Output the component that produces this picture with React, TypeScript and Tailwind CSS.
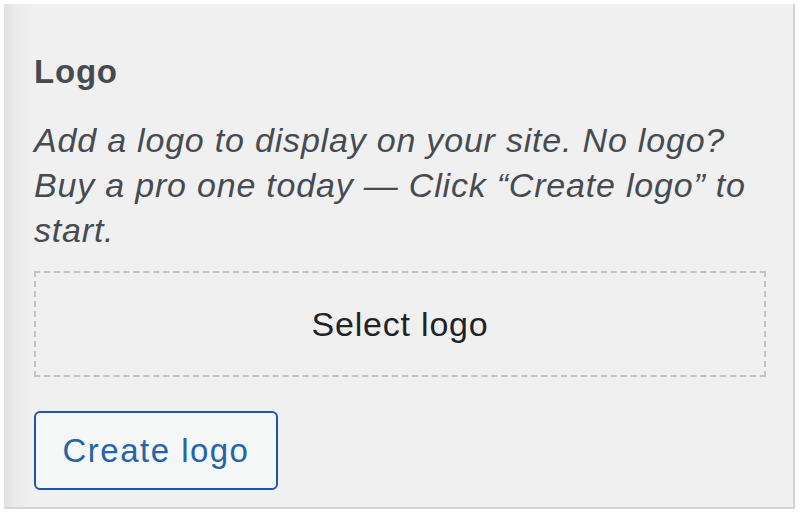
export default function App() {
  return (
    <div className="h-[514px] w-[800px] bg-white p-[4px] pr-[5px] pb-[5px]">
      <div
        className="h-full w-full border-r-2 border-b-2 border-[#d4d4d4] bg-[#f0f0f0] bg-[linear-gradient(90deg,#e2e2e2_0px,#ececec_14px,#f0f0f0_28px)] pl-[30px] pr-[27px] pt-[48px] tracking-[0.05em]"
        style={{ fontFamily: '"Liberation Sans", Arial, sans-serif' }}
      >
        <h2 className="text-[33px] font-bold leading-[40px] text-[#464b52]">Logo</h2>
        <p className="mt-[26px] whitespace-nowrap text-[34px] italic leading-[45px] text-[#464b52]">
          Add a logo to display on your site. No logo?
          <br />
          Buy a pro one today — Click “Create logo” to
          <br />
          start.
        </p>
        <div className="mt-[18px] flex h-[106px] items-center justify-center border-2 border-dashed border-[#c3c3c3] text-[34px] text-[#1d2327]">
          Select logo
        </div>
        <button className="mt-[34px] flex h-[79px] w-[244px] items-center justify-center rounded-[6px] border-2 border-[#1d55b0] bg-[#f5f6f6] text-[33px] tracking-[0.045em] text-[#2464ab]">
          Create logo
        </button>
      </div>
    </div>
  );
}
